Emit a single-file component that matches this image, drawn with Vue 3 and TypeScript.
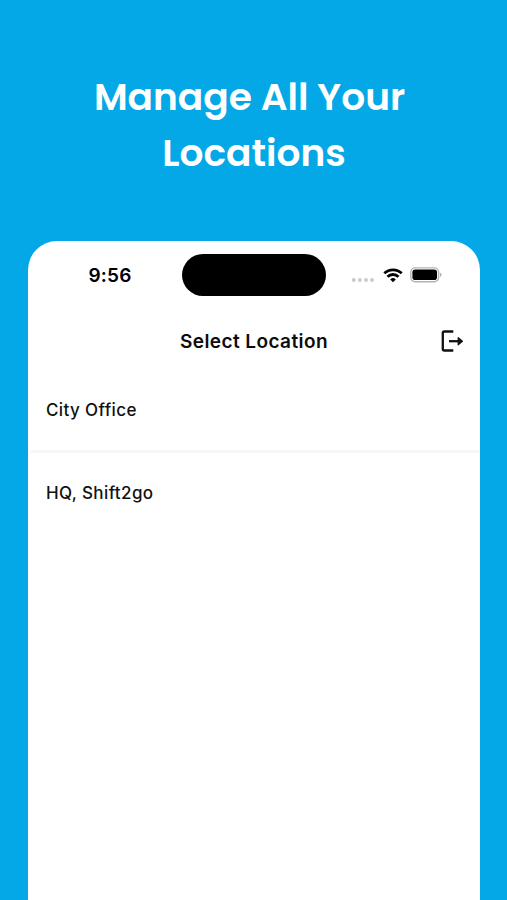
<script setup lang="ts">
const headline: string[] = ['Manage All Your', 'Locations']
const locations: string[] = ['City Office', 'HQ, Shift2go']
</script>

<template>
  <main class="poster">
    <h1 class="headline">
      <span v-for="(line, i) in headline" :key="line" :class="['line', 'line-' + i]">{{ line }}</span>
    </h1>
    <section class="phone">
      <div class="status">
        <span class="time">9:56</span>
        <div class="island"></div>
        <div class="indicators">
          <svg class="dots" width="24" height="6" viewBox="0 0 24 6" fill="#c9c9c9">
            <circle cx="2.8" cy="3" r="1.9" /><circle cx="8.9" cy="3" r="1.9" /><circle cx="15" cy="3" r="1.9" /><circle cx="21.1" cy="3" r="1.9" />
          </svg>
          <svg class="wifi" width="20" height="15" viewBox="0 0 20 15" fill="none" stroke="#000" stroke-width="2.8">
            <path d="M1.3 5.3a12.5 12.5 0 0 1 17.4 0" />
            <path d="M4.5 8.7a8 8 0 0 1 11 0" />
            <path d="M7.2 11.4a4 4 0 0 1 5.6 0L10 14.2z" fill="#000" stroke="none" />
          </svg>
          <svg class="battery" width="32" height="16" viewBox="0 0 32 16">
            <rect x=".8" y=".9" width="27.8" height="13.8" rx="4.4" fill="none" stroke="#b3b3b3" stroke-width="1.4" />
            <rect x="2.4" y="2.6" width="24.6" height="10.4" rx="2.8" />
            <path d="M30 5.7q1.7.5 1.7 2.1T30 9.9z" fill="#b3b3b3" />
          </svg>
        </div>
      </div>
      <header class="bar">
        <h2 class="title">Select Location</h2>
        <button class="logout" aria-label="Log out">
          <svg width="24" height="24" viewBox="0 0 24 24" fill="none" stroke="#111" stroke-width="2.3">
            <path d="M13.3 2.5H4.3Q2.8 2.5 2.8 4v16q0 1.5 1.5 1.5h9" />
            <path d="M9 12.2h11" />
            <path d="M18.2 8.6l4.2 3.6-4.2 3.6z" fill="#111" stroke-width="1.2" stroke-linejoin="round" />
          </svg>
        </button>
      </header>
      <ul class="list">
        <li v-for="name in locations" :key="name" class="item">{{ name }}</li>
      </ul>
    </section>
  </main>
</template>

<style>
body { margin: 0; background: #05a8e6; }
</style>

<style scoped>
.poster { box-sizing: border-box; height: 900px; padding: 69px 27px 0 28px; background: #05a8e6; overflow: hidden; font-family: Inter, sans-serif; color: #000; }
.headline { margin: 0; height: 172px; display: flex; flex-direction: column; align-items: center; color: #fff; font-family: Poppins, "Open Sans", sans-serif; font-size: 37.5px; font-weight: 600; line-height: 56px; }
.line { white-space: nowrap; }
.line-0 { padding-right: 9px; }
.phone { height: 680px; background: #fff; border-radius: 29px 29px 0 0; }
.status { display: grid; grid-template-columns: 154px 144px 154px; align-items: center; padding-top: 13px; height: 42px; }
.time { padding-left: 60.5px; font-size: 19px; font-weight: 600; letter-spacing: .2px; }
.island { height: 42px; border-radius: 21px; background: #000; }
.indicators { display: flex; align-items: center; padding-left: 25px; }
.dots { margin-top: 10px; }
.wifi { margin-left: 7.5px; }
.battery { margin-left: 7.5px; }
.bar { box-sizing: border-box; display: grid; grid-template-columns: 1fr auto 1fr; align-items: center; height: 74px; padding: 16px 16px 0; }
.title { grid-column: 2; margin: 0; color: #0c0c0c; font-size: 19px; font-weight: 600; letter-spacing: .42px; }
.logout { justify-self: end; padding: 0; border: 0; background: none; display: flex; }
.list { list-style: none; margin: 0; padding: 0 0 0 2px; }
.item { height: 83px; box-sizing: border-box; padding: 28px 16px; line-height: 24px; font-size: 17px; font-weight: 450; letter-spacing: .38px; color: #111; border-bottom: 3px solid #f7f7f7; }
.item:last-child { border: 0; }
</style>
